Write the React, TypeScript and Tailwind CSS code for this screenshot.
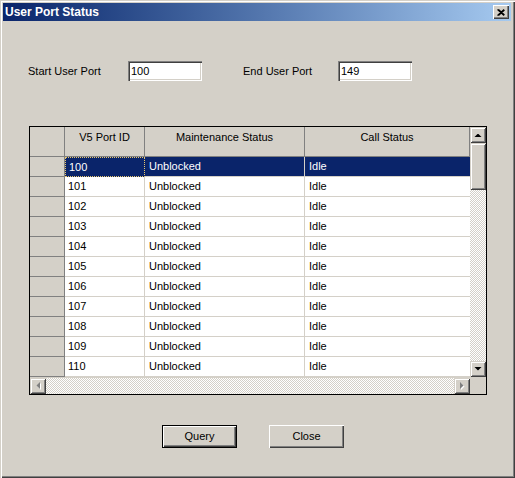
const rows = Array.from({ length: 11 }, (_, i) => String(100 + i));

const raised =
  "bg-[#d4d0c8] shadow-[inset_1px_1px_#d4d0c8,inset_-1px_-1px_#404040,inset_2px_2px_#ffffff,inset_-2px_-2px_#808080]";
const btnRaised =
  "bg-[#d4d0c8] shadow-[inset_1px_1px_#ffffff,inset_-1px_-1px_#404040,inset_-2px_-2px_#808080]";
const sunken =
  "bg-white shadow-[inset_1px_1px_#808080,inset_2px_2px_#404040,inset_-1px_-1px_#ffffff,inset_-2px_-2px_#d4d0c8]";
const track =
  "bg-[repeating-conic-gradient(#ffffff_0%_25%,#d4d0c8_0%_50%)] bg-[length:2px_2px]";

function Arrow({ dir, disabled }: { dir: "up" | "down" | "left" | "right"; disabled?: boolean }) {
  const pts = {
    up: "0.5,4 3.5,1 4.5,1 7.5,4",
    down: "0.5,0 7.5,0 4,3.5",
    left: "4,0 4,7 0.5,3.5",
    right: "0,0 0,7 3.5,3.5",
  }[dir];
  const vertical = dir === "up" || dir === "down";
  return (
    <svg width={vertical ? 8 : 5} height={vertical ? 5 : 8} viewBox={vertical ? "0 0 8 5" : "0 0 5 8"}>
      {disabled && <polygon points={pts} fill="#ffffff" transform="translate(1,1)" />}
      <polygon points={pts} fill={disabled ? "#808080" : "#000000"} />
    </svg>
  );
}

export default function App() {
  return (
    <div
      className="w-[515px] h-[478px] bg-[#d4d0c8] p-[3px] pr-[4px] text-[11px] text-black shadow-[inset_1px_1px_#d4d0c8,inset_2px_2px_#ffffff,inset_-1px_-1px_#404040,inset_-2px_-2px_#808080] flex flex-col"
      style={{ fontFamily: '"Liberation Sans", Arial, sans-serif' }}
    >
      {/* title bar */}
      <div className="h-[18px] flex items-center justify-between bg-gradient-to-r from-[#0a246a] to-[#a6caf0] pl-[2px] pr-[2px]">
        <span className="text-white font-bold text-[12px] leading-none">User Port Status</span>
        <button className={`w-[16px] h-[14px] flex items-center justify-center ${btnRaised}`}>
          <svg width="8" height="7" viewBox="0 0 8 7">
            <path d="M0.5 0.5 L7 6.5 M1.5 0.5 L7.5 6 M7 0.5 L0.5 6.5 M7.5 1 L1.5 6.5" stroke="#000" strokeWidth="1.1" />
          </svg>
        </button>
      </div>

      {/* port range */}
      <div className="mt-[40px] flex items-center h-[20px]">
        <span className="ml-[25px] w-[100px]">Start User Port</span>
        <div className={`w-[74px] h-[20px] flex items-center pl-[3px] ${sunken}`}>100</div>
        <span className="ml-[41px] w-[95px]">End User Port</span>
        <div className={`w-[74px] h-[20px] flex items-center pl-[3px] ${sunken}`}>149</div>
      </div>

      {/* grid */}
      <div className="mt-[45px] ml-[26px] w-[458px] h-[269px] border border-black flex flex-col bg-[#d4d0c8]">
        <div className="flex h-[250px]">
          <div className="w-[440px] flex flex-col overflow-hidden">
            <div className="flex h-[30px] shrink-0">
              <div className="w-[35px] border-r border-b border-[#808080]" />
              <div className="w-[80px] border-r border-b border-[#808080] text-center pt-[2px]">V5 Port ID</div>
              <div className="w-[160px] border-r border-b border-[#808080] text-center pt-[2px]">Maintenance Status</div>
              <div className="w-[165px] border-r border-b border-[#808080] text-center pt-[2px]">Call Status</div>
            </div>
            {rows.map((id, i) => {
              const sel = i === 0;
              return (
                <div key={id} className="flex h-[20px] shrink-0">
                  <div className="w-[35px] border-r border-b border-[#808080] bg-[#d4d0c8]" />
                  <div
                    className={`w-[80px] flex items-center pl-[3px] ${
                      sel
                        ? "bg-[#0a246a] text-white border border-dotted border-[#e8c870]"
                        : "bg-white border-r border-b border-[#d4d0c8]"
                    }`}
                  >
                    {id}
                  </div>
                  <div
                    className={`w-[160px] flex items-center pl-[4px] border-r border-b border-[#d4d0c8] ${
                      sel ? "bg-[#0a246a] text-white" : "bg-white"
                    }`}
                  >
                    Unblocked
                  </div>
                  <div
                    className={`w-[165px] flex items-center pl-[4px] border-b border-[#d4d0c8] ${
                      sel ? "bg-[#0a246a] text-white" : "bg-white"
                    }`}
                  >
                    Idle
                  </div>
                </div>
              );
            })}
          </div>
          {/* vertical scrollbar */}
          <div className={`w-[16px] flex flex-col ${track}`}>
            <div className={`h-[16px] flex items-center justify-center ${raised}`}>
              <Arrow dir="up" />
            </div>
            <div className={`h-[47px] ${raised}`} />
            <div className="flex-1" />
            <div className={`h-[16px] flex items-center justify-center ${raised}`}>
              <Arrow dir="down" />
            </div>
          </div>
        </div>
        {/* horizontal scrollbar */}
        <div className="flex h-[17px] border-t border-[#d4d0c8]">
          <div className={`w-[440px] flex ${track}`}>
            <div className={`w-[16px] flex items-center justify-center ${raised}`}>
              <Arrow dir="left" disabled />
            </div>
            <div className="flex-1" />
            <div className={`w-[16px] flex items-center justify-center ${raised}`}>
              <Arrow dir="right" disabled />
            </div>
          </div>
          <div className="w-[16px] bg-[#d4d0c8]" />
        </div>
      </div>

      {/* buttons */}
      <div className="mt-[30px] flex">
        <button className="ml-[159px] w-[75px] h-[23px] border border-black">
          <div className={`w-full h-full flex items-center justify-center ${btnRaised}`}>Query</div>
        </button>
        <button className={`ml-[32px] w-[75px] h-[23px] flex items-center justify-center ${btnRaised}`}>
          Close
        </button>
      </div>
    </div>
  );
}
